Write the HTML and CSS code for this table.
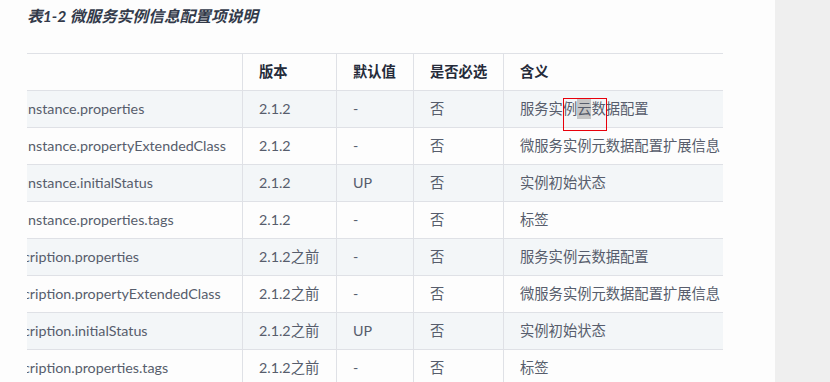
FILE: index.html
```html
<!DOCTYPE html>
<html lang="zh-CN">
<head>
<meta charset="utf-8">
<title>表1-2 微服务实例信息配置项说明</title>
<link rel="stylesheet" href="styles.css">
</head>
<body>
<main class="doc">
  <h3 class="caption">表1-2 微服务实例信息配置项说明</h3>
  <div class="table-wrap">
    <table class="conf">
      <colgroup>
        <col class="c-name">
        <col class="c-ver">
        <col class="c-def">
        <col class="c-req">
        <col class="c-desc">
      </colgroup>
      <thead>
        <tr><th></th><th>版本</th><th>默认值</th><th>是否必选</th><th>含义</th></tr>
      </thead>
      <tbody>
        <tr><td>nstance.properties</td><td>2.1.2</td><td>-</td><td>否</td><td class="desc">服务实例<span class="hit">云</span>数据配置</td></tr>
        <tr><td>nstance.propertyExtendedClass</td><td>2.1.2</td><td>-</td><td>否</td><td>微服务实例元数据配置扩展信息</td></tr>
        <tr><td>nstance.initialStatus</td><td>2.1.2</td><td>UP</td><td>否</td><td>实例初始状态</td></tr>
        <tr><td>nstance.properties.tags</td><td>2.1.2</td><td>-</td><td>否</td><td>标签</td></tr>
        <tr><td class="cut">cription.properties</td><td>2.1.2之前</td><td>-</td><td>否</td><td>服务实例云数据配置</td></tr>
        <tr><td class="cut">cription.propertyExtendedClass</td><td>2.1.2之前</td><td>-</td><td>否</td><td>微服务实例元数据配置扩展信息</td></tr>
        <tr><td class="cut">cription.initialStatus</td><td>2.1.2之前</td><td>UP</td><td>否</td><td>实例初始状态</td></tr>
        <tr><td class="cut">cription.properties.tags</td><td>2.1.2之前</td><td>-</td><td>否</td><td>标签</td></tr>
      </tbody>
    </table>
  </div>
</main>
<aside class="side"></aside>
</body>
</html>
```
FILE: styles.css
```css
html, body {
  margin: 0;
  padding: 0;
}
body {
  display: flex;
  height: 100vh;
  overflow: hidden;
  background: #fdfdfd;
  font-family: Lato, "Noto Sans CJK SC", sans-serif;
  color: #575d6c;
}
.doc {
  width: 775px;
  flex: none;
  box-sizing: border-box;
  padding-left: 27px;
  overflow: hidden;
}
.side {
  flex: 1;
  background: #efefef;
}
.caption {
  margin: 4px 0 0;
  font-size: 15.7px;
  line-height: 24px;
  font-weight: 700;
  font-style: italic;
  color: #333a4a;
}
.table-wrap {
  margin-top: 25px;
  width: 696px;
  overflow: hidden;
}
.conf {
  margin-left: -16px;
  border-collapse: collapse;
  table-layout: fixed;
  width: 752px;
  font-size: 14.3px;
  line-height: 20px;
}
.c-name { width: 231px; }
.c-ver { width: 94px; }
.c-def { width: 77px; }
.c-req { width: 90px; }
.c-desc { width: 260px; }
.conf th,
.conf td {
  border: 1px solid #dfe1e6;
  padding: 8px 16px;
  text-align: left;
  white-space: nowrap;
  overflow: hidden;
  vertical-align: middle;
}
.conf th {
  font-weight: 700;
  color: #252b3a;
  background: #fdfdfd;
}
.conf tbody tr:nth-child(odd) td {
  background: #f3f6f8;
}
.conf tbody tr:nth-child(even) td {
  background: #fdfdfd;
}
.conf td.cut {
  text-indent: -5px;
}
.conf td.desc {
  overflow: visible;
}
.hit {
  position: relative;
  display: inline-block;
  line-height: 20px;
  background: #c6c6c6;
}
.hit::after {
  content: "";
  position: absolute;
  left: -14px;
  top: -1px;
  width: 44px;
  height: 33px;
  box-sizing: border-box;
  border: 1px solid #e8000b;
}
```
